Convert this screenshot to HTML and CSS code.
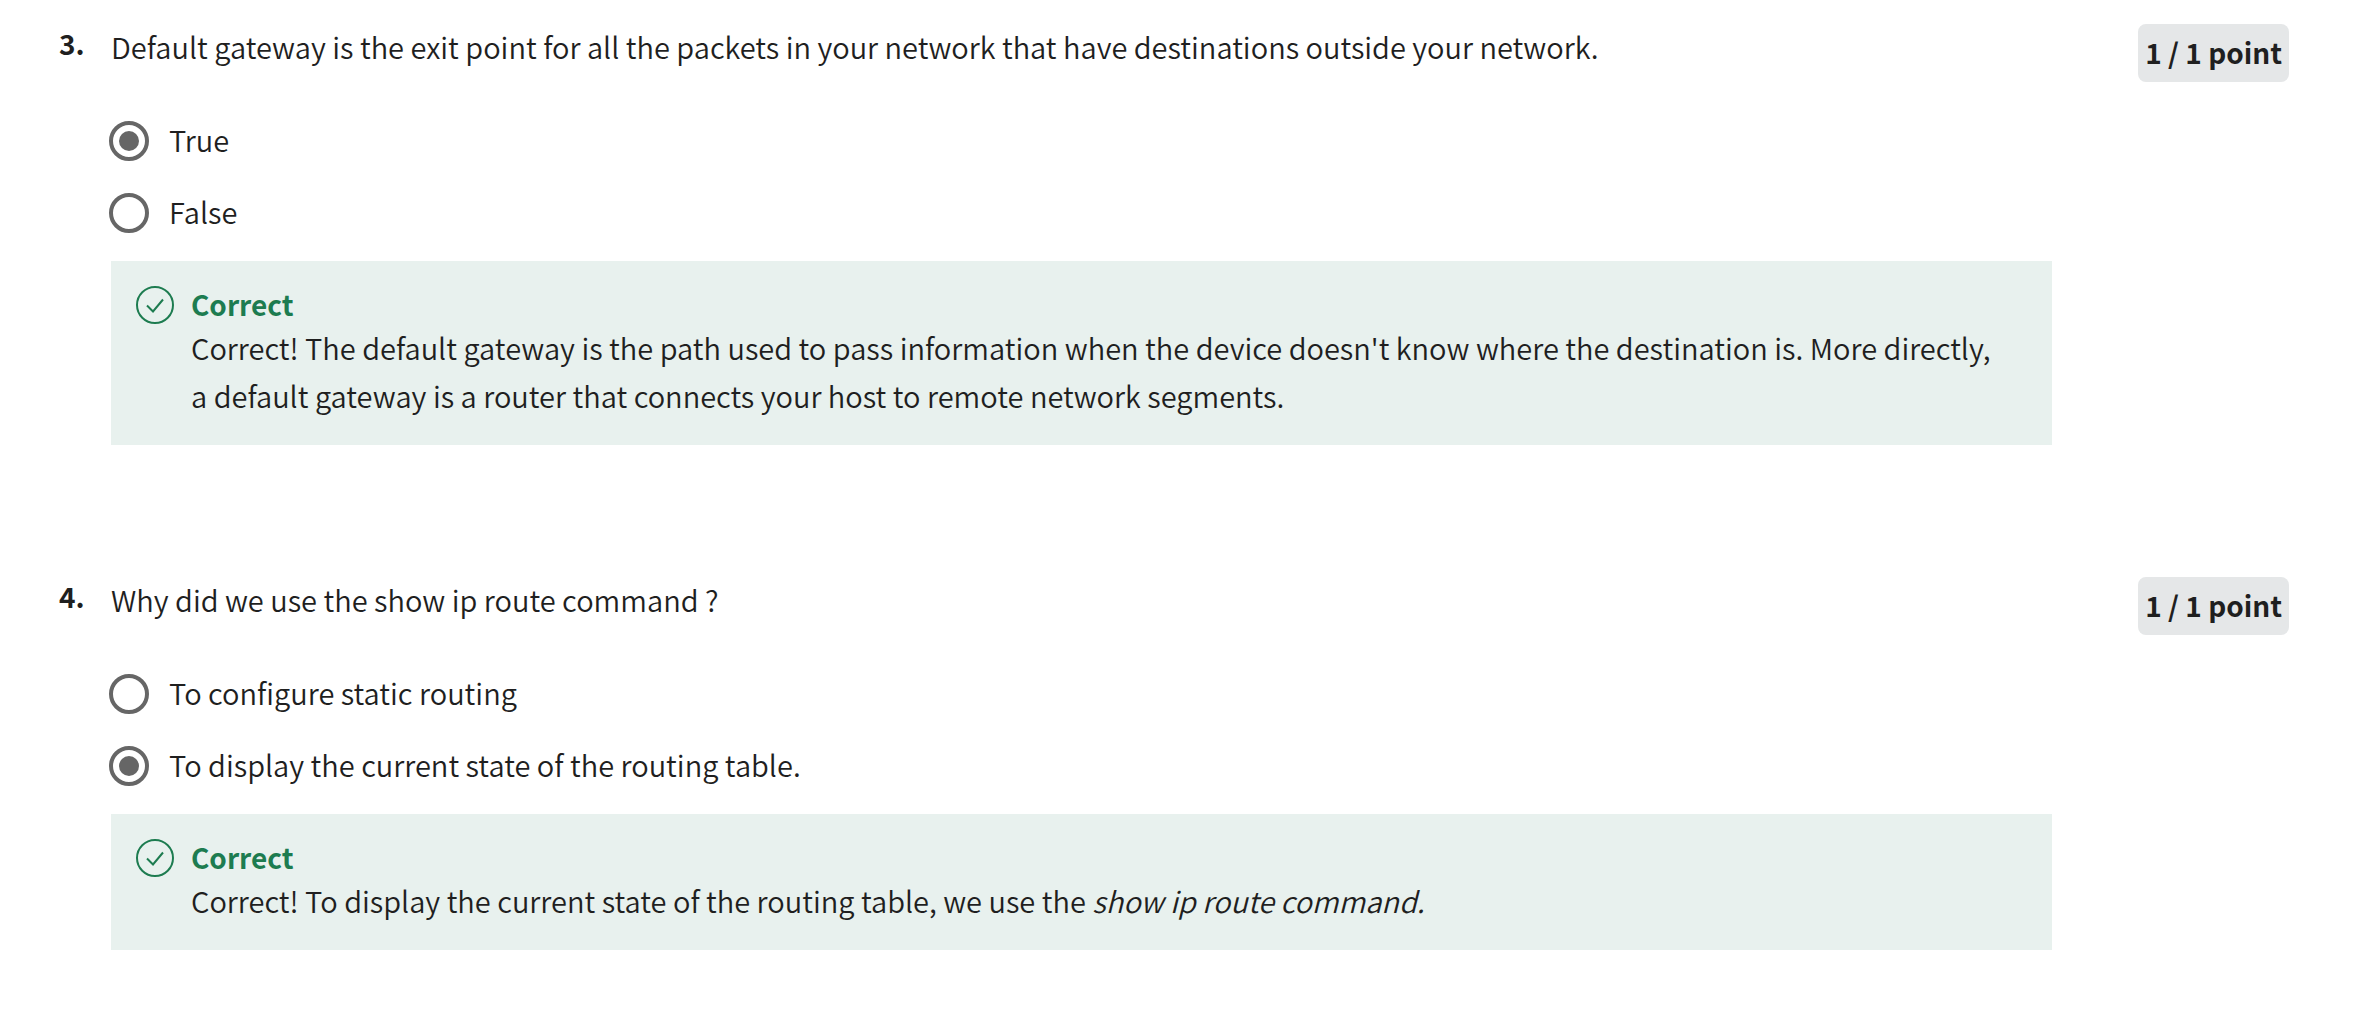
FILE: index.html
```html
<!DOCTYPE html>
<html lang="en">
<head>
<meta charset="utf-8">
<title>Quiz results</title>
<link rel="stylesheet" href="styles.css">
</head>
<body>
<main class="quiz">
  <section class="question">
    <span class="number">3.</span>
    <div class="content">
      <p class="prompt" id="q3">Default gateway is the exit point for all the packets in your network that have destinations outside your network.</p>
      <div class="options" role="radiogroup" aria-labelledby="q3">
        <label class="option"><input class="radio" type="radio" name="q3" checked><span class="label">True</span></label>
        <label class="option"><input class="radio" type="radio" name="q3"><span class="label">False</span></label>
      </div>
      <div class="feedback">
        <svg class="check" viewBox="0 0 40 40" aria-hidden="true"><circle cx="20" cy="20" r="18"/><path d="M12 20.500l6 6 10-12"/></svg>
        <div>
          <h2 class="verdict">Correct</h2>
          <p class="explanation">Correct! The default gateway is the path used to pass information when the device doesn't know where the destination is. More directly, a default gateway is a router that connects your host to remote network segments.</p>
        </div>
      </div>
    </div>
    <span class="points">1 / 1 point</span>
  </section>
  <section class="question">
    <span class="number">4.</span>
    <div class="content">
      <p class="prompt" id="q4">Why did we use the show ip route command ?</p>
      <div class="options" role="radiogroup" aria-labelledby="q4">
        <label class="option"><input class="radio" type="radio" name="q4"><span class="label">To configure static routing</span></label>
        <label class="option"><input class="radio" type="radio" name="q4" checked><span class="label">To display the current state of the routing table.</span></label>
      </div>
      <div class="feedback">
        <svg class="check" viewBox="0 0 40 40" aria-hidden="true"><circle cx="20" cy="20" r="18"/><path d="M12 20.500l6 6 10-12"/></svg>
        <div>
          <h2 class="verdict">Correct</h2>
          <p class="explanation">Correct! To display the current state of the routing table, we use the <em>show ip route command.</em></p>
        </div>
      </div>
    </div>
    <span class="points">1 / 1 point</span>
  </section>
</main>
</body>
</html>
```
FILE: styles.css
```css
* { box-sizing: border-box; }
body {
  margin: 0;
  background: #fff;
  color: #1f1f1f;
  font: 350 29px/48px "Noto Sans CJK SC", "Open Sans", sans-serif;
}
p, h2 { margin: 0; }
.quiz {
  display: flex;
  flex-direction: column;
  gap: 132px;
  padding: 24px 83px 24px 59px;
}
.question { display: flex; align-items: flex-start; }
.number { width: 52px; flex: none; font-size: 28px; font-weight: 700; line-height: 38px; }
.content { flex: 1; margin-right: 86px; }
.prompt { line-height: 44px; }
.options { margin: 37px 0 12px; }
.option { display: flex; align-items: center; gap: 20px; height: 72px; }
.label { padding-bottom: 4px; }
.radio {
  appearance: none;
  flex: none;
  width: 40px;
  height: 40px;
  margin: 0 0 0 -2px;
  border: 4px solid #666;
  border-radius: 50%;
}
.radio:checked { background: #666 content-box; padding: 6px; }
.feedback {
  display: flex;
  gap: 16px;
  padding: 24px 48px 26px 24px;
  background: #e8f1ee;
}
.check {
  flex: none;
  width: 40px;
  height: 40px;
  fill: none;
  stroke: #1d7c50;
  stroke-width: 2;
}
.verdict { color: #1d7c50; font-size: 28px; font-weight: 700; line-height: 38px; }
.points {
  flex: none;
  padding: 4px 7px 6px;
  border-radius: 8px;
  background: #e5e7e8;
  font-size: 28px;
  font-weight: 700;
}
```
